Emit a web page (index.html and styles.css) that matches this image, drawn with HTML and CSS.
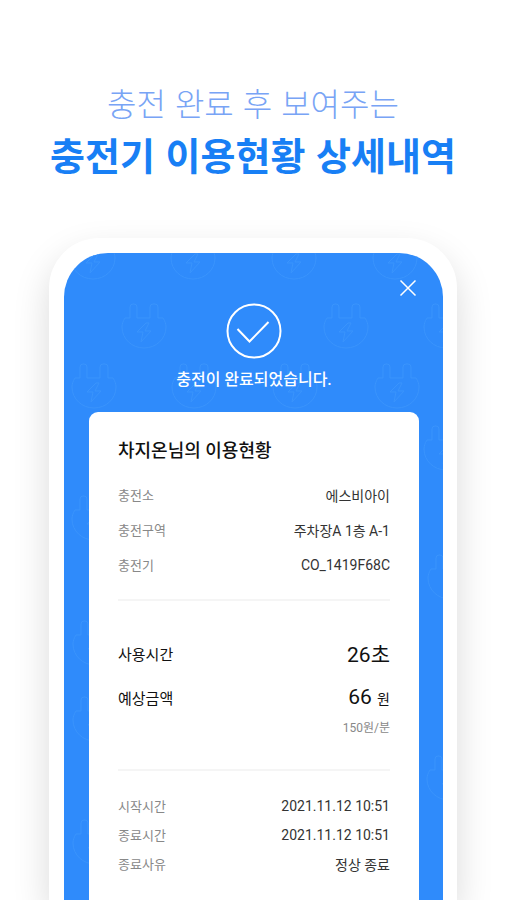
FILE: index.html
```html
<!DOCTYPE html>
<html lang="ko">
<head>
<meta charset="utf-8">
<meta name="viewport" content="width=device-width, initial-scale=1">
<title>충전기 이용현황</title>
<link rel="stylesheet" href="styles.css">
</head>
<body>
<main class="page">
  <h1 class="headline">
    <span class="headline-light">충전 완료 후 보여주는</span>
    <span class="headline-bold">충전기 이용현황 상세내역</span>
  </h1>
  <div class="phone">
    <div class="screen">
      <svg class="pattern" width="380" height="660" viewBox="0 0 380 660" aria-hidden="true">
        <defs>
          <g id="plug">
            <path d="M-14-9V-20Q-14-23-11-23H-10Q-7-23-7-20V-9H6V-20Q6-23 9-23H11Q14-23 14-20V-9H19C21-6 22-3 22 0C22 12 12 21 0 21S-22 12-22 0C-22-3-21-6-19-9Z"/>
            <path d="M2-4L-7 5H-1L-3 15L7 4H1L5-4Z"/>
          </g>
        </defs>
        <use href="#plug" x="29" y="5"/><use href="#plug" x="129" y="5"/><use href="#plug" x="230" y="5"/><use href="#plug" x="331" y="5"/>
        <use href="#plug" x="80" y="74"/><use href="#plug" x="282" y="74"/><use href="#plug" x="382" y="74"/>
        <use href="#plug" x="30" y="134"/><use href="#plug" x="130" y="134"/><use href="#plug" x="231" y="134"/><use href="#plug" x="333" y="134"/>
        <use href="#plug" x="382" y="196"/><use href="#plug" x="30" y="266"/><use href="#plug" x="386" y="325"/>
        <use href="#plug" x="31" y="391"/><use href="#plug" x="31" y="467"/><use href="#plug" x="385" y="526"/><use href="#plug" x="31" y="590"/>
      </svg>
      <header class="status">
        <button class="close" type="button" aria-label="닫기">
          <svg width="18" height="18" viewBox="0 0 18 18" aria-hidden="true"><path d="M1.500 1.500L16.500 16.500M16.500 1.500L1.500 16.500"/></svg>
        </button>
        <svg class="check" width="56" height="56" viewBox="0 0 56 56" aria-hidden="true"><circle cx="28" cy="28" r="26.500"/><path d="M11.500 26L23.500 38.500L42.500 19"/></svg>
        <p class="message">충전이 완료되었습니다.</p>
      </header>
      <section class="card">
        <h2 class="card-title">차지온님의 이용현황</h2>
        <dl class="rows place">
          <div class="row"><dt>충전소</dt><dd>에스비아이</dd></div>
          <div class="row"><dt>충전구역</dt><dd>주차장A 1층 A-1</dd></div>
          <div class="row"><dt>충전기</dt><dd>CO_1419F68C</dd></div>
        </dl>
        <dl class="rows usage">
          <div class="row"><dt>사용시간</dt><dd>26초</dd></div>
          <div class="row"><dt>예상금액</dt><dd>66 <span class="won">원</span></dd></div>
        </dl>
        <p class="rate">150원/분</p>
        <dl class="rows times">
          <div class="row"><dt>시작시간</dt><dd>2021.11.12 10:51</dd></div>
          <div class="row"><dt>종료시간</dt><dd>2021.11.12 10:51</dd></div>
          <div class="row"><dt>종료사유</dt><dd>정상 종료</dd></div>
        </dl>
      </section>
    </div>
  </div>
</main>
</body>
</html>
```
FILE: styles.css
```css
* {
  box-sizing: border-box;
}

body,
h1,
h2,
p,
dl,
dd {
  margin: 0;
}

body {
  background: #fff;
  color: #333;
  font-family: Roboto, "Noto Sans CJK KR", sans-serif;
}

.page {
  display: flex;
  flex-direction: column;
  min-height: 100vh;
  padding-top: 77px;
  overflow: hidden;
}

.headline {
  display: flex;
  flex-direction: column;
  margin-bottom: 58px;
  font-family: "Noto Sans CJK KR", sans-serif;
  text-align: center;
  white-space: nowrap;
}

.headline-light {
  color: #78a4f5;
  font-size: 32px;
  font-weight: 300;
  line-height: 50px;
}

.headline-bold {
  color: #187ff5;
  font-size: 38px;
  font-weight: 700;
  line-height: 53px;
}

.phone {
  display: flex;
  flex: 1;
  margin: 0 49px;
  padding: 15px 14px 0 15px;
  border-radius: 50px 50px 0 0;
  background: #fff;
  box-shadow: 0 16px 36px rgba(0, 0, 0, 0.15);
}

.screen {
  position: relative;
  display: flex;
  flex: 1;
  flex-direction: column;
  padding: 0 24px 0 25px;
  border-radius: 44px 44px 0 0;
  background: #2f8bfb;
  overflow: hidden;
}

.pattern {
  position: absolute;
  top: 0;
  left: 0;
  fill: none;
  stroke: #3a94fc;
  stroke-width: 1;
}

.status {
  position: relative;
  display: flex;
  flex-direction: column;
  align-items: center;
  padding-top: 50px;
  color: #fff;
}

.close {
  position: absolute;
  top: 24px;
  right: 0;
  display: flex;
  padding: 2px;
  border: 0;
  background: none;
}

.close svg,
.check {
  fill: none;
  stroke: #fff;
  stroke-width: 2;
}

.close svg {
  stroke-width: 1.500;
}

.message {
  margin: 9px 0 20px;
  font-size: 16px;
  font-weight: 500;
  line-height: 24px;
}

.card {
  position: relative;
  flex: 1;
  padding: 26px 29px 20px;
  border-radius: 9px 9px 0 0;
  background: #fff;
}

.card-title {
  color: #111;
  font-size: 18px;
  font-weight: 500;
  line-height: 26px;
}

.row {
  display: flex;
  align-items: center;
  justify-content: space-between;
}

.rows {
  font-size: 13px;
}

.rows dd {
  font-size: 14px;
}

.place {
  padding: 13px 0 17px;
  border-bottom: 2px solid #f5f5f5;
}

.place .row {
  height: 35px;
}

.times .row {
  height: 29px;
}

dt {
  color: #888;
}

.usage {
  padding-top: 30px;
}

.usage .row {
  height: 44px;
}

.usage dt {
  color: #111;
  font-size: 15px;
}

.usage dd {
  color: #111;
  font-size: 21px;
}

.usage .won {
  font-size: 14px;
}

.rate {
  padding-bottom: 32px;
  border-bottom: 2px solid #f5f5f5;
  color: #888;
  font-size: 12px;
  line-height: 18px;
  text-align: right;
}

.times {
  padding-top: 20px;
}
```
